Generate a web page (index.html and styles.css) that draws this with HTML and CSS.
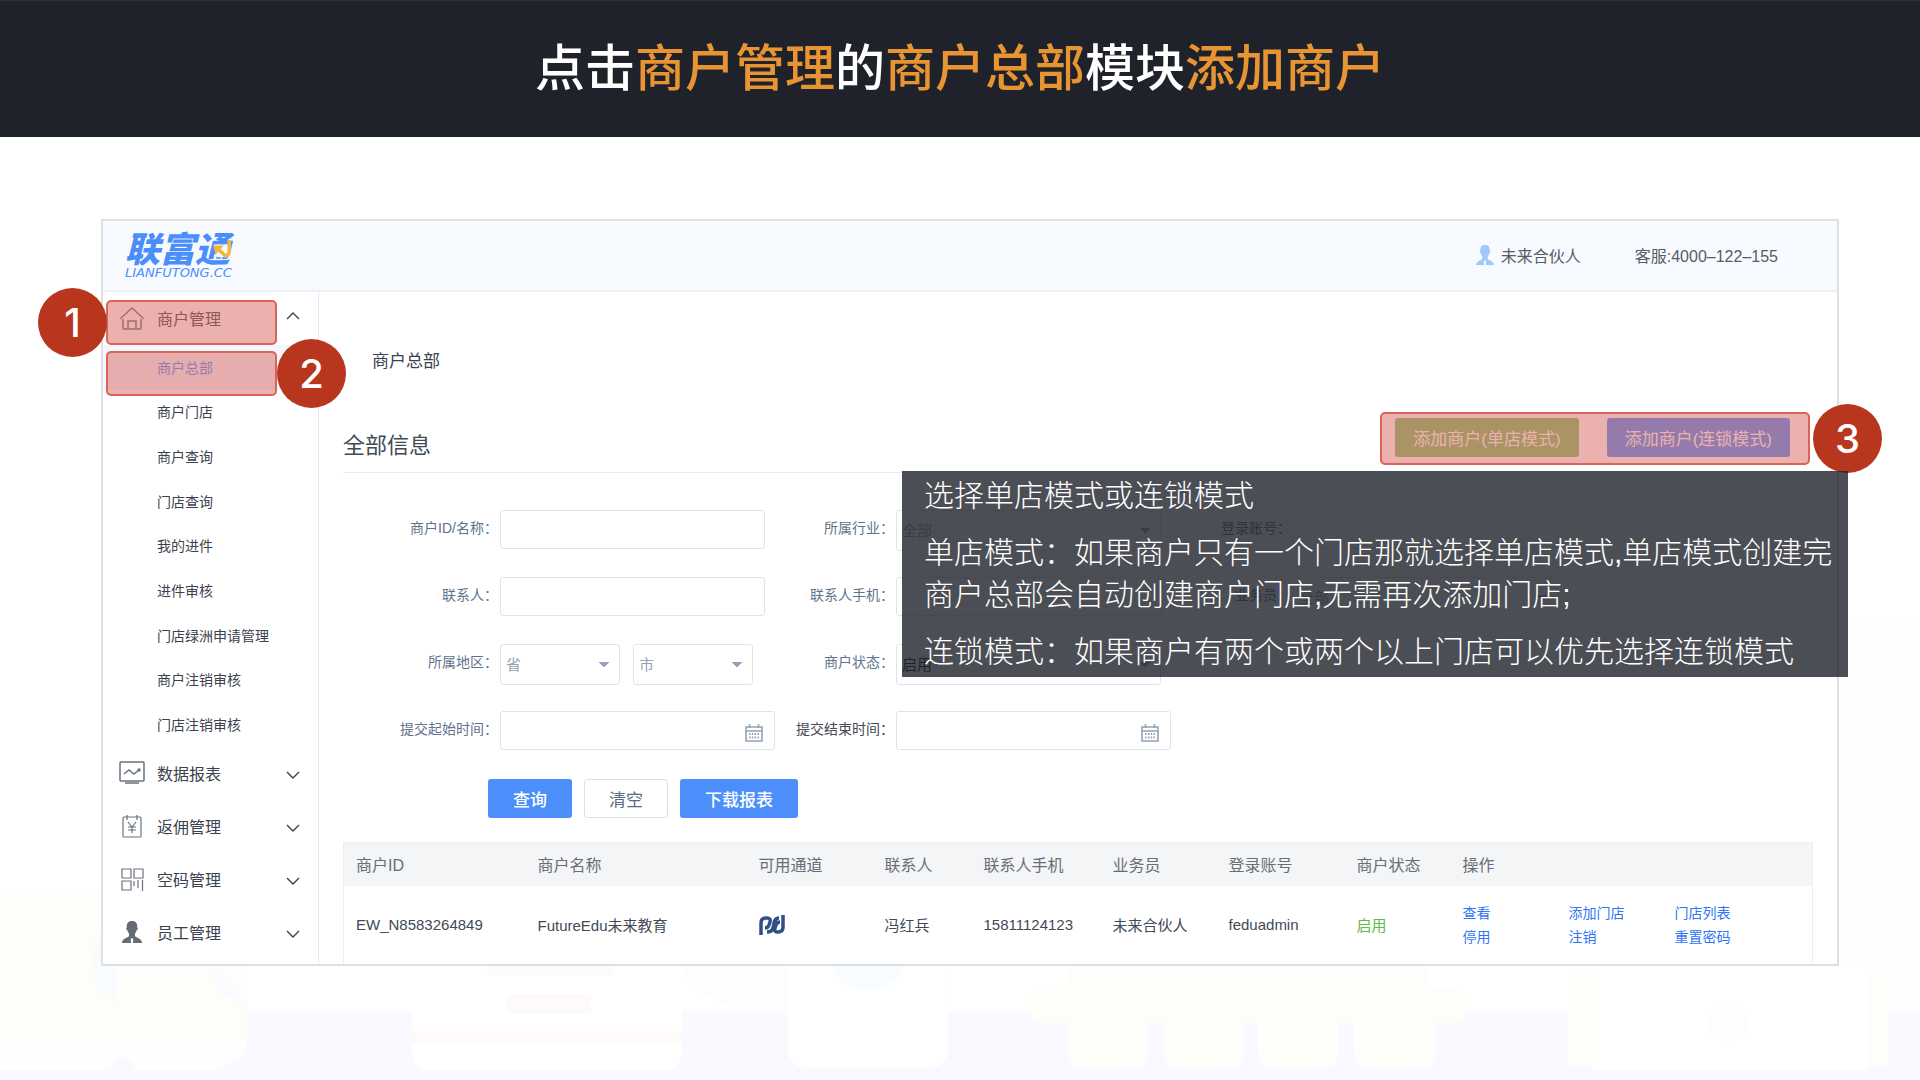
FILE: index.html
```html
<!DOCTYPE html>
<html lang="zh-CN">
<head>
<meta charset="utf-8">
<meta name="viewport" content="width=device-width, initial-scale=1">
<title>添加商户 - 商户总部</title>
<link rel="stylesheet" href="styles.css">
</head>
<body>
<svg class="icon-defs" aria-hidden="true">
  <symbol id="chevron" viewBox="0 0 14 8"><path d="M1 1l6 6 6-6" fill="none" stroke="currentColor" stroke-width="1.4"/></symbol>
  <symbol id="person" viewBox="0 0 20 22"><path d="M10 0c4 0 5.600 2.600 5.200 6.400.6.2.7.8.5 1.600-.2.8-.5 1.200-1 1.300-.3 1.400-.9 2.400-1.700 3.200v2.600c0 1.400 7 2.200 7 6.900h-9.200l.6-3.200-.8-1.600h-1.200l-.8 1.600.6 3.200H0c0-4.700 7-5.500 7-6.900v-2.600c-.8-.8-1.400-1.800-1.700-3.200-.5-.1-.8-.5-1-1.300-.2-.8-.1-1.400.5-1.600C4.400 2.600 6 0 10 0z" fill="currentColor"/></symbol>
  <symbol id="calendar" viewBox="0 0 18 18"><path d="M1 3h16v14H1zM1 7h16M4.500 0v4M13.500 0v4" fill="none" stroke="currentColor" stroke-width="1.600"/><path d="M4 10h10M4 13.500h10" stroke="currentColor" stroke-width="2" stroke-dasharray="1.500 1.300"/></symbol>
</svg>

<header class="banner">
  <h1 class="banner-title">点击<em>商户管理</em>的<em>商户总部</em>模块<em>添加商户</em></h1>
</header>

<main class="stage">
  <svg class="scenery" viewBox="0 0 1920 460" preserveAspectRatio="none" aria-hidden="true">
    <path d="M1838 0h82v460h-82z" fill="#fefefe"/>
    <path d="M0 391h1920v69H0z" fill="#f8faff"/>
    <path d="M0 269h247v153H0z" fill="#fffdf9"/>
    <path d="M0 422h247q-2 14-12 18t-14 10H136q-13-26-26 0H0z" fill="#fefefe"/>
    <path d="M100 315a50 50 0 0 0 16 68v-36M209 345a44 44 0 0 0 38 38" fill="#f8fcfe"/>
    <path d="M412 330h270v100q0 20-20 20H432q-20 0-20-20z" fill="#fff"/>
    <path d="M487 330h126v25H487zM507 374h84v20h-84zM412 411h270v12H412z" fill="#fffafa"/>
    <path d="M682 345h267v46H740q-50-16-58-46z" fill="#fffcfc"/>
    <path d="M788 330h160v98q0 20-20 20H808q-20 0-20-20z" fill="#fff"/>
    <path d="M831 345h73q-6 24-36 24t-37-24z" fill="#f9fcff"/>
    <path d="M1068 345h360v22h20q18 0 18 20t-18 16H1044q-14 0-14-18t14-20h24z" fill="#fffdf9"/>
    <path d="M1068 403h80v30q-2 16-20 16h-40q-18 0-20-16zM1164 403h80v30q-2 16-20 16h-40q-18 0-20-16zM1258 403h81v30q-2 16-20 16h-41q-18 0-20-16zM1354 403h82v30q-2 16-20 16h-42q-18 0-20-16z" fill="#fffefa"/>
    <path d="M1568 354h320v92h-320z" fill="#fffdf9"/>
    <path d="M1593 345h276v105h-276z" fill="#fff"/>
    <circle cx="1728" cy="401" r="20" fill="#fffdfb"/>
  </svg>

  <div class="screen-frame">
    <section class="screen">
      <header class="topbar">
        <a class="logo" href="#">
          <span class="logo-name">联富通</span>
          <span class="logo-domain">LIANFUTONG.CC</span>
          <svg class="logo-arrow" viewBox="0 0 22 24" aria-hidden="true"><path d="M2 6h18v14H6z" fill="#f7fbff"/><path d="M19 1v13q-1 5-5 4L7 11" fill="none" stroke="#f2b640" stroke-width="4"/><path d="M1 7h12L4 17z" fill="#f2b640"/></svg>
        </a>
        <div class="account">
          <svg class="account-icon" aria-hidden="true"><use href="#person"/></svg>
          <span>未来合伙人</span>
        </div>
        <div class="hotline">客服:4000–122–155</div>
      </header>

      <div class="workspace">
        <nav class="sidebar">
          <a class="menu" href="#">
            <svg class="menu-icon" viewBox="0 0 26 26" aria-hidden="true"><path d="M1 14L13 3l12 11M4 14v9q0 1 1 1h16q1 0 1-1v-9M9 24v-8h8v8"/></svg>
            <span>商户管理</span><svg class="chevron up" aria-hidden="true"><use href="#chevron"/></svg>
          </a>
          <div class="submenu">
            <a class="active" href="#">商户总部</a>
            <a href="#">商户门店</a>
            <a href="#">商户查询</a>
            <a href="#">门店查询</a>
            <a href="#">我的进件</a>
            <a href="#">进件审核</a>
            <a href="#">门店绿洲申请管理</a>
            <a href="#">商户注销审核</a>
            <a href="#">门店注销审核</a>
          </div>
          <a class="menu" href="#">
            <svg class="menu-icon" viewBox="0 0 26 26" aria-hidden="true"><rect x="1" y="2" width="24" height="19" rx="1"/><path d="M5 14l5-4 5 4 5-4M6 23h14"/><circle cx="20" cy="10" r="1"/></svg>
            <span>数据报表</span><svg class="chevron" aria-hidden="true"><use href="#chevron"/></svg>
          </a>
          <a class="menu" href="#">
            <svg class="menu-icon thin" viewBox="0 0 26 26" aria-hidden="true"><rect x="4" y="4" width="18" height="20" rx="1"/><path d="M8 2v5M18 2v5M9 9l4 5 4-5M9 14h8M9 17h8M13 14v6"/></svg>
            <span>返佣管理</span><svg class="chevron" aria-hidden="true"><use href="#chevron"/></svg>
          </a>
          <a class="menu" href="#">
            <svg class="menu-icon thin" viewBox="0 0 26 26" aria-hidden="true"><path d="M3 3h9v9H3zM15 3h9v9h-9zM3 15h9v9H3zM15 15v5M19 14v8M23.500 14v11"/></svg>
            <span>空码管理</span><svg class="chevron" aria-hidden="true"><use href="#chevron"/></svg>
          </a>
          <a class="menu" href="#">
            <svg class="menu-icon solid" aria-hidden="true"><use href="#person"/></svg>
            <span>员工管理</span><svg class="chevron" aria-hidden="true"><use href="#chevron"/></svg>
          </a>
        </nav>

        <div class="content">
          <div class="crumb">商户总部</div>
          <div class="section-head">
            <h2>全部信息</h2>
            <div class="add-actions">
              <button class="btn add green" type="button">添加商户(单店模式)</button>
              <button class="btn add blue" type="button">添加商户(连锁模式)</button>
            </div>
          </div>

          <form class="filters">
            <label for="f-id">商户ID/名称：</label>
            <div class="field"><input id="f-id" type="text"></div>
            <label for="f-trade">所属行业：</label>
            <div class="field"><select id="f-trade" class="muted"><option>全部</option></select></div>
            <label for="f-login">登录账号：</label>
            <div class="field"><input id="f-login" type="text"></div>

            <label for="f-contact">联系人：</label>
            <div class="field"><input id="f-contact" type="text"></div>
            <label for="f-phone">联系人手机：</label>
            <div class="field"><input id="f-phone" type="text"></div>
            <label for="f-sales">业务员：</label>
            <div class="field"><select id="f-sales" class="muted"><option>全部</option></select></div>

            <label for="f-prov">所属地区：</label>
            <div class="field pair">
              <select id="f-prov" class="muted"><option>省</option></select>
              <select id="f-city" class="muted" aria-label="市"><option>市</option></select>
            </div>
            <label for="f-state">商户状态：</label>
            <div class="field"><select id="f-state"><option>启用</option></select></div>
            <span></span><span></span>

            <label for="f-from">提交起始时间：</label>
            <div class="field date"><input id="f-from" type="text"><svg class="calendar" aria-hidden="true"><use href="#calendar"/></svg></div>
            <label for="f-to" class="dark">提交结束时间：</label>
            <div class="field date"><input id="f-to" type="text"><svg class="calendar" aria-hidden="true"><use href="#calendar"/></svg></div>
          </form>

          <div class="form-actions">
            <button class="btn blue" type="button">查询</button>
            <button class="btn plain" type="button">清空</button>
            <button class="btn blue" type="button">下载报表</button>
          </div>

          <table class="merchants">
            <colgroup><col class="c-id"><col class="c-name"><col class="c-channel"><col class="c-contact"><col class="c-phone"><col class="c-sales"><col class="c-login"><col class="c-state"><col></colgroup>
            <thead>
              <tr><th>商户ID</th><th>商户名称</th><th>可用通道</th><th>联系人</th><th>联系人手机</th><th>业务员</th><th>登录账号</th><th>商户状态</th><th>操作</th></tr>
            </thead>
            <tbody>
              <tr>
                <td>EW_N8583264849</td>
                <td>FutureEdu未来教育</td>
                <td><svg class="channel" viewBox="0 0 26 22" aria-hidden="true"><path d="M2 21V9q0-5 5-5h1q4 0 3 4l-1 3q-1 3-4 3M8 18q5 0 6-4l1-5q1-5 5-5M24 1v12q0 5-5 5h-1q-3 0-2-4l1-3q1-3 4-3" fill="none" stroke="#2f4f87" stroke-width="3.500"/></svg></td>
                <td>冯红兵</td>
                <td>15811124123</td>
                <td>未来合伙人</td>
                <td>feduadmin</td>
                <td class="enabled">启用</td>
                <td><div class="ops"><a href="#">查看</a><a href="#">添加门店</a><a href="#">门店列表</a><a href="#">停用</a><a href="#">注销</a><a href="#">重置密码</a></div></td>
              </tr>
            </tbody>
          </table>
        </div>
      </div>
    </section>

    <div class="highlight step-one"></div>
    <div class="highlight step-two"></div>
    <div class="highlight step-three"></div>
    <div class="badge badge-one">1</div>
    <div class="badge badge-two">2</div>
    <div class="badge badge-three">3</div>
    <aside class="note">
      <p>选择单店模式或连锁模式</p>
      <p>单店模式：如果商户只有一个门店那就选择单店模式,单店模式创建完商户总部会自动创建商户门店,无需再次添加门店;</p>
      <p>连锁模式：如果商户有两个或两个以上门店可以优先选择连锁模式</p>
    </aside>
  </div>
</main>
</body>
</html>
```
FILE: styles.css
```css
* { box-sizing: border-box; }

body {
  margin: 0;
  min-height: 100vh;
  display: flex;
  flex-direction: column;
  background: #fff;
  color: #414a57;
  font-family: "Liberation Sans", "Noto Sans CJK SC", sans-serif;
  font-size: 14px;
}

a { color: inherit; text-decoration: none; }
h1, h2, p { margin: 0; font-weight: 400; }
.icon-defs { display: none; }

.banner {
  display: flex;
  align-items: center;
  justify-content: center;
  height: 137px;
  background: #1f222b;
  border-top: 1px solid #2b2f39;
}
.banner-title { font-size: 50px; line-height: 60px; font-weight: 500; color: #fff; }
.banner-title em { font-style: normal; color: #e89432; }

.stage { position: relative; flex: 1; padding: 82px 81px 112px 101px; }
.scenery { position: absolute; left: 0; bottom: 0; width: 100%; height: 460px; }
.screen-frame { position: relative; }

.screen { background: #fff; border: 2px solid #dee0e3; }

.topbar {
  display: flex;
  align-items: center;
  height: 71px;
  padding: 0 59px 2px 0;
  background: #f7fbff;
  border-bottom: 2px solid #ebf1f7;
  font-size: 16px;
  color: #565d66;
}
.logo { position: relative; display: grid; margin: 2px auto 0 22px; padding-top: 2px; color: #4c8ef9; font-style: italic; }
.logo-name { font-size: 35px; line-height: 32px; font-weight: 900; }
.logo-domain { font: italic 13px/14px "DejaVu Sans", sans-serif; }
.logo-arrow { position: absolute; right: 0; top: 7px; width: 20px; height: 22px; }
.account { display: flex; align-items: center; gap: 7px; margin-right: 54px; }
.account-icon { width: 18px; height: 20px; color: #a0c8fa; }

.workspace { display: flex; }

.sidebar { flex: none; width: 216px; border-right: 1px solid #e4eaf2; color: #3b424e; }
.menu { display: flex; align-items: center; height: 53px; padding: 0 18px 2px 16px; font-size: 16px; }
.menu span { flex: 1; padding-left: 12px; }
.menu-icon { width: 26px; height: 26px; fill: none; stroke: #6b727c; stroke-width: 1.500; }
.menu-icon.thin { stroke-width: 1.200; }
.menu-icon.solid { height: 22px; color: #666c74; stroke: none; }
.chevron { width: 14px; height: 8px; margin-top: 5px; }
.chevron.up { margin: 0 0 3px; transform: rotate(180deg); }
.submenu { display: grid; grid-auto-rows: 1fr; height: 402px; }
.submenu a { display: flex; align-items: center; padding: 0 0 1px 54px; }
.submenu .active { background: #f2f7fd; color: #4c8ef9; }

.content { flex: 1; min-width: 0; padding: 49px 24px 0; }
.crumb { padding-left: 29px; font-size: 17px; line-height: 42px; color: #3b424e; }
.section-head {
  display: flex;
  align-items: flex-start;
  justify-content: space-between;
  height: 90px;
  padding: 35px 23px 0 0;
  border-bottom: 1px solid #e4ecf4;
}
.section-head h2 { padding-top: 13px; font-size: 22px; line-height: 30px; }
.add-actions { display: flex; gap: 28px; }

.btn {
  height: 39px;
  padding: 0 25px;
  border: 0;
  border-radius: 3px;
  font-family: inherit;
  font-size: 17px;
  color: #fff;
}
.btn.add { padding: 0 18px; }
.btn.blue { background: #4c8ffb; font-weight: 500; }
.btn.add.blue { font-weight: 400; }
.btn.green { background: #78c064; }
.btn.plain { background: #fff; border: 1px solid #dcdfe4; padding: 0 24px; color: #5c6b80; }

.filters {
  display: grid;
  grid-template-columns: 157px 265px 131px 265px 132px 265px;
  grid-auto-rows: 41px;
  row-gap: 26px;
  align-items: start;
  margin-top: 37px;
  color: #61738c;
}
.filters label { padding-right: 2px; line-height: 37px; text-align: right; white-space: nowrap; }
.filters .dark { color: #454a52; }
.field { display: flex; }
.field input, .field select {
  width: 100%;
  height: 39px;
  padding: 0 5px;
  background: transparent;
  border: 1px solid #dfe4ec;
  border-radius: 3px;
  font-family: inherit;
  font-size: 15px;
  color: #222;
}
.field select {
  height: 41px;
  appearance: none;
  background-image: linear-gradient(to bottom left, #94a3b5 50%, transparent 50%), linear-gradient(to bottom right, #94a3b5 50%, transparent 50%);
  background-position: right 15px center, right 10px center;
  background-size: 5px 6px;
  background-repeat: no-repeat;
}
.field select.muted { color: #94a3b5; }
.pair { gap: 13px; }
.pair select { width: 120px; }
.date { position: relative; width: 275px; }
.calendar { position: absolute; right: 12px; top: 13px; width: 18px; height: 18px; color: #94a3b5; }

.form-actions { display: flex; gap: 12px; margin: 27px 0 24px 145px; }

.merchants {
  width: 100%;
  table-layout: fixed;
  border-collapse: collapse;
  border: 1px solid #ebeff3;
  border-bottom: 0;
}
.merchants th, .merchants td { padding: 0 0 0 12px; text-align: left; white-space: nowrap; }
.merchants th { height: 43px; background: #f3f5f7; font-size: 16px; font-weight: 400; color: #686e77; }
.merchants td { height: 78px; font-size: 15px; }
.merchants .enabled { color: #5fba4c; }
.c-id { width: 182px; }
.c-name { width: 221px; }
.c-channel { width: 126px; }
.c-contact { width: 99px; }
.c-phone { width: 129px; }
.c-sales { width: 116px; }
.c-login { width: 128px; }
.c-state { width: 106px; }
.channel { display: block; width: 26px; height: 22px; }
.ops { display: grid; grid-template-columns: repeat(3, 106px); font-size: 14px; line-height: 24px; color: #2f74f5; }

.highlight {
  position: absolute;
  background: rgba(216, 105, 99, .52);
  border: 2px solid #db6359;
  border-radius: 5px;
}
.step-one, .step-two { left: 5px; width: 171px; height: 45px; }
.step-one { top: 81px; }
.step-two { top: 132px; }
.step-three { right: 29px; top: 193px; width: 430px; height: 53px; }

.badge {
  position: absolute;
  display: flex;
  align-items: center;
  justify-content: center;
  width: 69px;
  height: 69px;
  border-radius: 50%;
  background: #b8361e;
  color: #fff;
  font-family: Inter, "Liberation Sans", sans-serif;
  font-size: 40px;
  font-weight: 500;
}
.badge-one { left: -63px; top: 69px; }
.badge-two { left: 176px; top: 120px; }
.badge-three { right: -43px; top: 185px; }

.note {
  position: absolute;
  left: 801px;
  right: -9px;
  top: 252px;
  display: grid;
  gap: 15px;
  padding: 4px 12px 4px 22px;
  background: rgba(31, 34, 43, .8);
  color: #fff;
  font-size: 30px;
  line-height: 42px;
}
.note p { font-weight: 300; }
```
